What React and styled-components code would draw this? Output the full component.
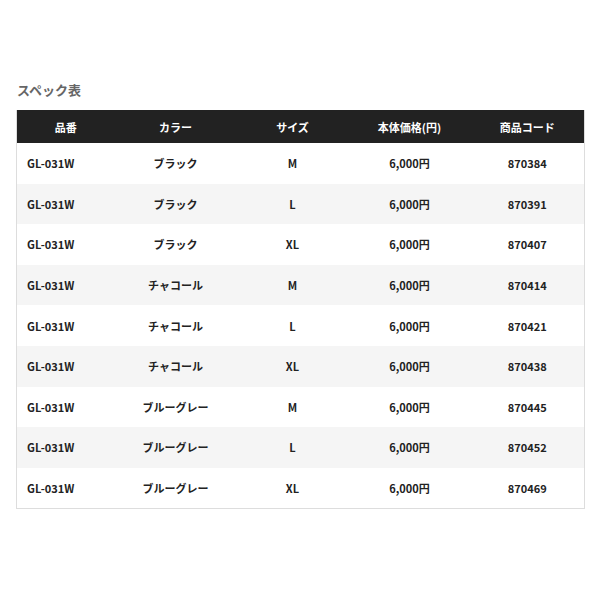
import React from 'react'
import styled, { createGlobalStyle } from 'styled-components'

const GlobalStyle = createGlobalStyle`
  html, body {
    margin: 0;
    padding: 0;
    background: #fff;
  }
  body {
    font-family: "Noto Sans CJK JP", "Noto Sans", sans-serif;
    color: #222;
  }
`;

const Page = styled.div`
  width: 600px;
  height: 600px;
  padding: 80px 16px 0 16px;
  box-sizing: border-box;
`;

const Title = styled.h2`
  margin: 0 0 10px 1px;
  font-size: 13px;
  line-height: 20px;
  font-weight: 700;
  color: #666;
`;

const Table = styled.table`
  width: 568px;
  border-collapse: collapse;
  table-layout: fixed;
  border: 1px solid #ddd;
  border-top: none;
`;

const HeadCell = styled.th`
  background: #222;
  color: #fff;
  height: 33px;
  padding: 0;
  font-size: 11px;
  font-weight: 700;
  text-align: center;
`;

const Row = styled.tr`
  background: ${p => (p.$shade ? '#f5f5f5' : '#fff')};
`;

const Cell = styled.td`
  height: 40.6px;
  padding: 0 0 0 ${p => (p.$left ? '10px' : '0')};
  font-size: 11px;
  font-weight: 700;
  color: #222;
  text-align: ${p => (p.$left ? 'left' : 'center')};
`;

const columns = [
  { label: '品番', width: 98 },
  { label: 'カラー', width: 122 },
  { label: 'サイズ', width: 112 },
  { label: '本体価格(円)', width: 122 },
  { label: '商品コード', width: 114 },
];

const rows = [
  ['ブラック', 'M', '870384'],
  ['ブラック', 'L', '870391'],
  ['ブラック', 'XL', '870407'],
  ['チャコール', 'M', '870414'],
  ['チャコール', 'L', '870421'],
  ['チャコール', 'XL', '870438'],
  ['ブルーグレー', 'M', '870445'],
  ['ブルーグレー', 'L', '870452'],
  ['ブルーグレー', 'XL', '870469'],
];

const App = () => {
  return (
    <>
      <GlobalStyle />
      <Page>
        <Title>スペック表</Title>
        <Table>
          <colgroup>
            {columns.map(c => <col key={c.label} style={{ width: c.width }} />)}
          </colgroup>
          <thead>
            <tr>
              {columns.map(c => <HeadCell key={c.label}>{c.label}</HeadCell>)}
            </tr>
          </thead>
          <tbody>
            {rows.map((r, i) => (
              <Row key={r[2]} $shade={i % 2 === 1}>
                <Cell $left>GL-031W</Cell>
                <Cell>{r[0]}</Cell>
                <Cell>{r[1]}</Cell>
                <Cell>6,000円</Cell>
                <Cell>{r[2]}</Cell>
              </Row>
            ))}
          </tbody>
        </Table>
      </Page>
    </>
  )
}

export default App
